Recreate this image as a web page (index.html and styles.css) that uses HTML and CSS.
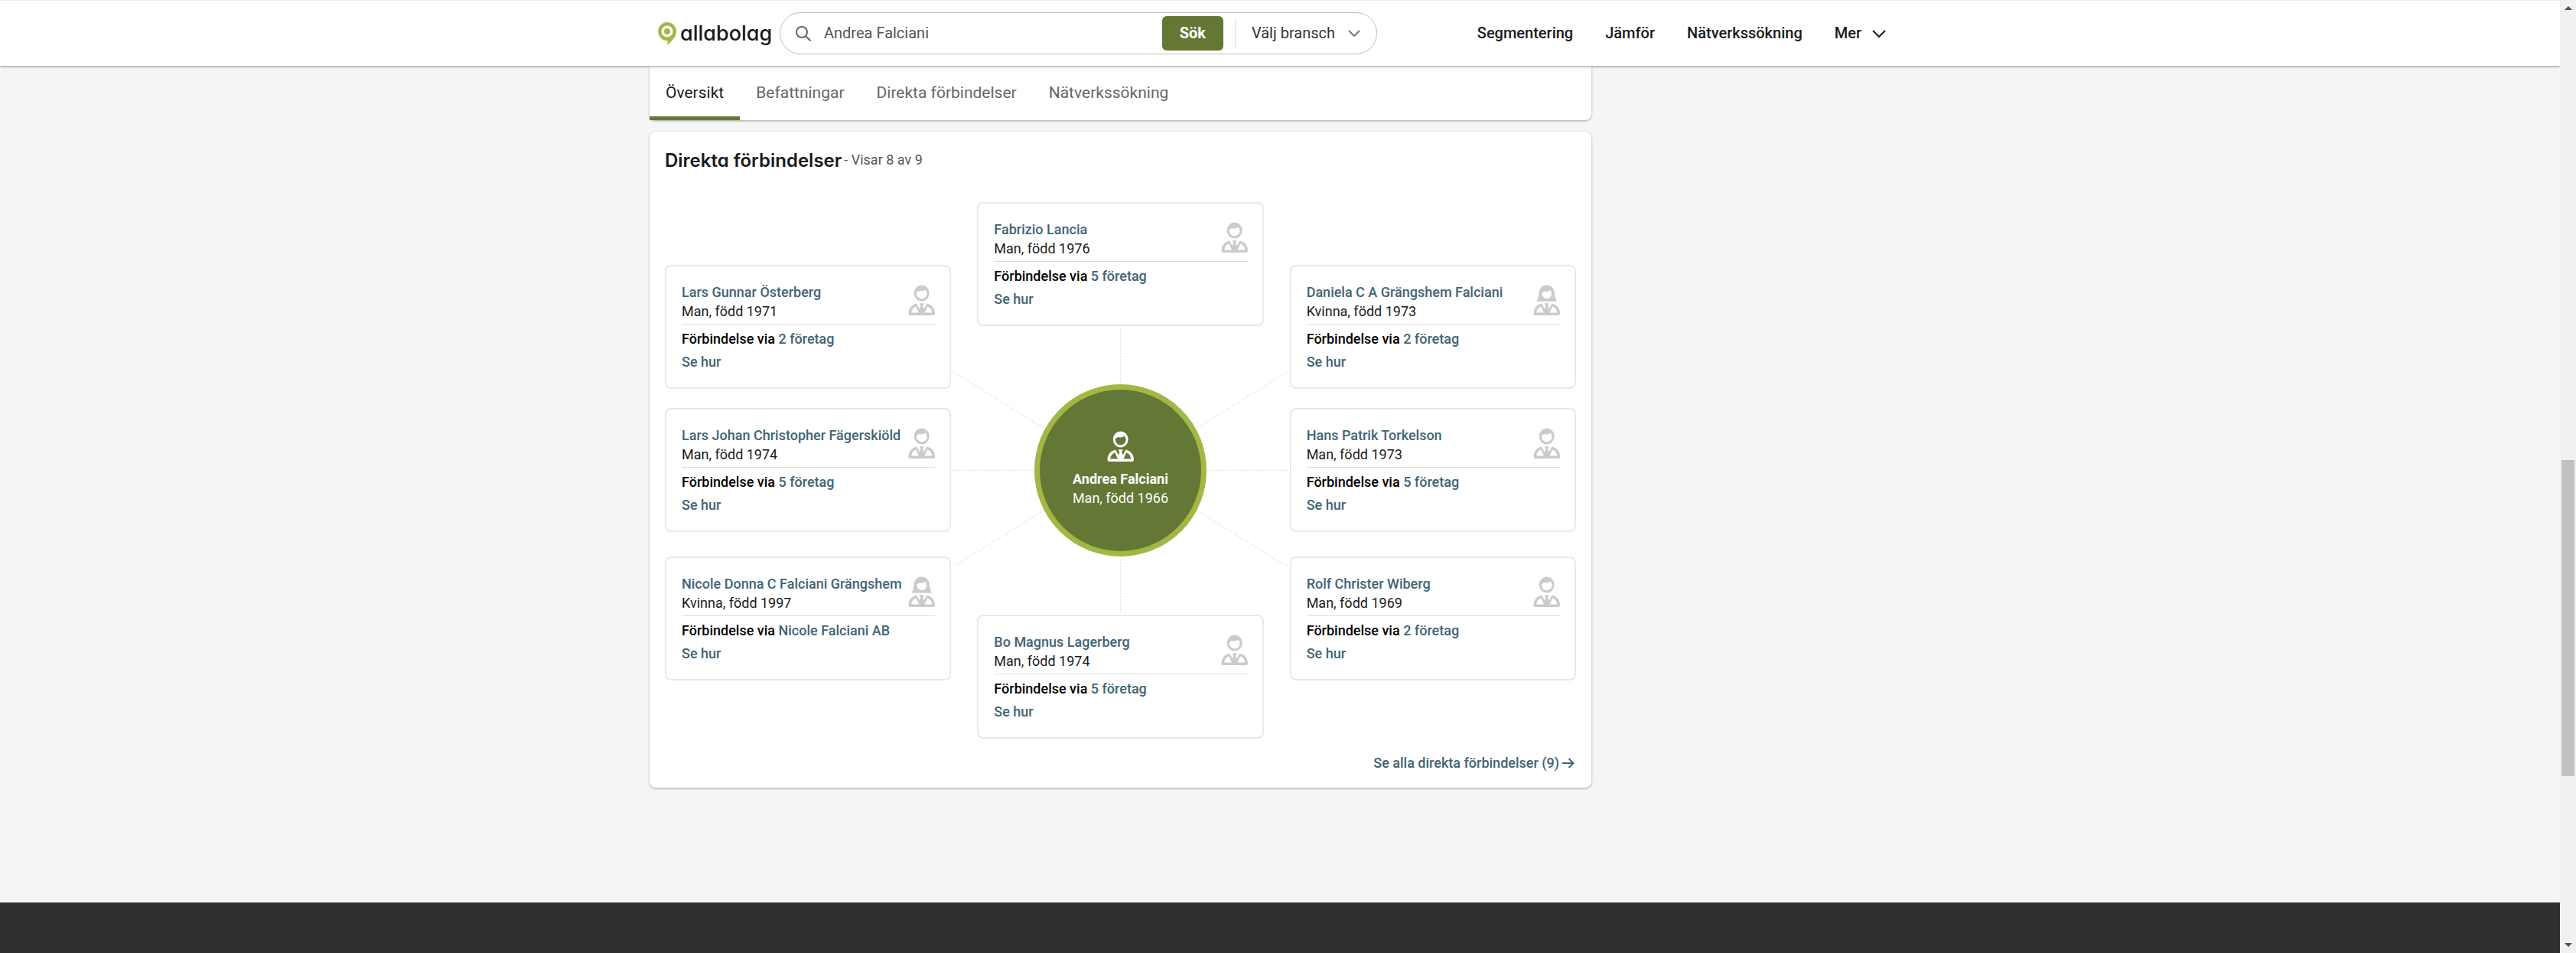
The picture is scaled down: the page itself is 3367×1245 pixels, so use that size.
FILE: index.html
```html
<!DOCTYPE html>
<html lang="sv">
<head>
<meta charset="utf-8">
<meta name="viewport" content="width=device-width, initial-scale=1">
<title>Andrea Falciani - Direkta förbindelser</title>
<link rel="stylesheet" href="styles.css">
</head>
<body>
<svg class="sprite" aria-hidden="true">
  <symbol id="shoulders" viewBox="0 0 35 40">
    <path fill="currentColor" fill-rule="evenodd" d="M11 24.500C4.500 26 .5 31 .5 37.500Q.5 40 3 40H32.500Q35 40 35 37.500C35 31 31 26 24.500 24.500L20.500 31.500 19.200 28 20.700 24.300H14.800L16.300 28 15 31.500ZM10.200 28.300 14 36.500H4.200C4.500 33 6.500 29.800 10.200 28.300ZM25.300 28.300C29 29.800 31 33 31.300 36.500H21.500Z"/>
  </symbol>
  <symbol id="man" viewBox="0 0 35 40">
    <path fill="currentColor" fill-rule="evenodd" d="M17.700 .5A10 10.500 0 1 1 17.700 21.500 10 10.500 0 1 1 17.700 .5ZM11 10C10.500 15 13.700 18.300 17.700 18.300 21.700 18.300 24.800 15 24.600 11 24.400 9 23.500 7.500 22 6.500 19.500 9.500 16 8 14.500 8.200 13 8.500 12 9.300 11 10Z"/>
    <use href="#shoulders"/>
  </symbol>
  <symbol id="woman" viewBox="0 0 35 40">
    <path fill="currentColor" fill-rule="evenodd" d="M17.700 .5C11.500 .5 8 5 7.500 11 7.200 15 6.500 18 4.500 21.800H31C29 18 28.200 15 27.900 11 27.400 5 24 .5 17.700 .5ZM11.500 10.500C11 15 14 18 17.700 18 21.500 18 24.300 15 24.100 11 24 9.500 23.200 8 21.800 7 19.500 9.500 16.500 8.500 15 8.700 13.500 9 12.500 9.700 11.500 10.500Z"/>
    <use href="#shoulders"/>
  </symbol>
</svg>

<header class="topbar">
  <div class="wrap topbar-inner">
    <a class="logo" href="#">
      <svg class="logo-pin" viewBox="0 0 24 30" aria-hidden="true">
        <path fill="#a3b745" fill-rule="evenodd" d="M12 0A12 12 0 0 1 24 12C24 20 18 24 12.500 30V24A12 12 0 1 1 12 0ZM12 4.500A7.500 7.500 0 1 0 12 19.500 7.500 7.500 0 1 0 12 4.500Z"/>
        <circle cx="12" cy="12" r="4" fill="#a3b745"/>
      </svg>
      <span class="logo-text">allabolag</span>
    </a>
    <form class="search">
      <svg class="search-icon" viewBox="0 0 20 20" aria-hidden="true"><circle cx="8" cy="8" r="7"/><path d="M13 13 19.500 19.500"/></svg>
      <input class="search-input" type="text" aria-label="Sök" value="Andrea Falciani">
      <button class="search-button" type="submit">Sök</button>
      <button class="industry" type="button">Välj bransch
        <svg class="chevron chevron-thin" viewBox="0 0 18 12" aria-hidden="true"><path d="M2 2 9 9 16 2"/></svg>
      </button>
    </form>
    <nav class="mainnav" aria-label="Huvudmeny">
      <a href="#">Segmentering</a>
      <a href="#">Jämför</a>
      <a href="#">Nätverkssökning</a>
      <button class="more" type="button">Mer
        <svg class="chevron" viewBox="0 0 18 12" aria-hidden="true"><path d="M1 2 9 10 17 2"/></svg>
      </button>
    </nav>
  </div>
</header>

<div class="wrap page">
  <main class="content">
    <nav class="card tabs" aria-label="Flikar">
      <a class="tab tab-active" href="#">Översikt</a>
      <a class="tab" href="#">Befattningar</a>
      <a class="tab" href="#">Direkta förbindelser</a>
      <a class="tab" href="#">Nätverkssökning</a>
    </nav>

    <section class="card connections">
      <div class="heading">
        <h2>Direkta förbindelser</h2>
        <span class="count">- Visar 8 av 9</span>
      </div>

      <div class="network">
        <svg class="lines" viewBox="0 0 1190 700" preserveAspectRatio="none" aria-hidden="true">
          <path d="M595 165V236M595 466V535M376 350H482M708 350H814M378 222 495 295M812 222 695 295M378 475 495 402M812 475 695 402"/>
        </svg>

        <div class="column">
          <article class="person">
            <div class="person-head"><div><a href="#">Lars Gunnar Österberg</a><p>Man, född 1971</p></div><svg class="avatar"><use href="#man"/></svg></div>
            <p class="via">Förbindelse via <a href="#">2 företag</a></p>
            <a class="how" href="#">Se hur</a>
          </article>
          <article class="person">
            <div class="person-head"><div><a href="#">Lars Johan Christopher Fägerskiöld</a><p>Man, född 1974</p></div><svg class="avatar"><use href="#man"/></svg></div>
            <p class="via">Förbindelse via <a href="#">5 företag</a></p>
            <a class="how" href="#">Se hur</a>
          </article>
          <article class="person">
            <div class="person-head"><div><a href="#">Nicole Donna C Falciani Grängshem</a><p>Kvinna, född 1997</p></div><svg class="avatar"><use href="#woman"/></svg></div>
            <p class="via">Förbindelse via <a href="#">Nicole Falciani AB</a></p>
            <a class="how" href="#">Se hur</a>
          </article>
        </div>

        <div class="column column-middle">
          <article class="person">
            <div class="person-head"><div><a href="#">Fabrizio Lancia</a><p>Man, född 1976</p></div><svg class="avatar"><use href="#man"/></svg></div>
            <p class="via">Förbindelse via <a href="#">5 företag</a></p>
            <a class="how" href="#">Se hur</a>
          </article>
          <div class="hub">
            <svg class="avatar"><use href="#man"/></svg>
            <strong>Andrea Falciani</strong>
            <span>Man, född 1966</span>
          </div>
          <article class="person">
            <div class="person-head"><div><a href="#">Bo Magnus Lagerberg</a><p>Man, född 1974</p></div><svg class="avatar"><use href="#man"/></svg></div>
            <p class="via">Förbindelse via <a href="#">5 företag</a></p>
            <a class="how" href="#">Se hur</a>
          </article>
        </div>

        <div class="column">
          <article class="person">
            <div class="person-head"><div><a href="#">Daniela C A Grängshem Falciani</a><p>Kvinna, född 1973</p></div><svg class="avatar"><use href="#woman"/></svg></div>
            <p class="via">Förbindelse via <a href="#">2 företag</a></p>
            <a class="how" href="#">Se hur</a>
          </article>
          <article class="person">
            <div class="person-head"><div><a href="#">Hans Patrik Torkelson</a><p>Man, född 1973</p></div><svg class="avatar"><use href="#man"/></svg></div>
            <p class="via">Förbindelse via <a href="#">5 företag</a></p>
            <a class="how" href="#">Se hur</a>
          </article>
          <article class="person">
            <div class="person-head"><div><a href="#">Rolf Christer Wiberg</a><p>Man, född 1969</p></div><svg class="avatar"><use href="#man"/></svg></div>
            <p class="via">Förbindelse via <a href="#">2 företag</a></p>
            <a class="how" href="#">Se hur</a>
          </article>
        </div>
      </div>

      <a class="all" href="#">Se alla direkta förbindelser (9)
        <svg class="arrow" viewBox="0 0 16 14" aria-hidden="true"><path d="M0 7H14.500M8.500 1 14.500 7 8.500 13"/></svg>
      </a>
    </section>
  </main>
</div>

<footer class="footer"></footer>

<div class="scrollbar" aria-hidden="true">
  <svg viewBox="0 0 12 6"><path d="M0 6 6 0 12 6Z"/></svg>
  <div class="track"><div class="thumb"></div></div>
  <svg viewBox="0 0 12 6"><path d="M0 0 6 6 12 0Z"/></svg>
</div>
</body>
</html>
```

FILE: styles.css
```css
* { box-sizing: border-box; }

body {
  margin: 0;
  min-height: 100vh;
  padding-right: 21px;
  display: flex;
  flex-direction: column;
  overflow: hidden;
  background: #f5f5f5;
  color: #1a1a1a;
  font-family: Roboto, "Liberation Sans", sans-serif;
  font-size: 18px;
  line-height: 25px;
}

h2, p { margin: 0; }
a { color: #3f6475; text-decoration: none; }
button, input { font: inherit; color: inherit; border: 0; background: none; padding: 0; }
.sprite { display: none; }

.wrap {
  width: 100%;
  max-width: 1648px;
  margin: 0 auto;
}

/* Top bar */
.topbar {
  position: relative;
  z-index: 1;
  background: #fff;
  border-top: 1px solid #ececec;
  box-shadow: 0 1px 3px rgba(0, 0, 0, .4);
  font-size: 20px;
}
.topbar-inner {
  display: flex;
  align-items: center;
  padding: 15px 32px 15px 11px;
}
.logo {
  width: 159px;
  display: flex;
  align-items: center;
  gap: 5px;
  color: #1a1a1a;
}
.logo-pin { width: 24px; height: 30px; }
.logo-text {
  font-family: Inter, sans-serif;
  font-feature-settings: "cv11";
  font-size: 27px;
  font-weight: 500;
}
.search {
  flex: 0 1 781px;
  height: 55px;
  display: flex;
  align-items: center;
  padding: 0 20px;
  border: 1px solid #bdbdbd;
  border-radius: 28px;
}
.search-icon {
  width: 20px;
  height: 20px;
  margin-right: 17px;
  fill: none;
  stroke: #666;
  stroke-width: 2;
}
.search-input { flex: 1; min-width: 0; color: #555; outline: 0; }
.search-button {
  width: 80px;
  height: 45px;
  margin-right: 15px;
  border-radius: 6px;
  background: #637835;
  color: #fff;
  font-weight: 700;
}
.industry {
  height: 40px;
  display: flex;
  align-items: center;
  gap: 16px;
  padding-left: 21px;
  border-left: 1px solid #e2e2e2;
  color: #333;
}
.chevron { width: 18px; height: 12px; fill: none; stroke: #1a1a1a; stroke-width: 2; }
.chevron-thin { stroke: #777; }
.mainnav {
  margin-left: auto;
  display: flex;
  gap: 42px;
  font-weight: 500;
}
.mainnav a { color: #1a1a1a; }
.more { display: flex; align-items: center; gap: 14px; }

/* Page column */
.page {
  display: grid;
  grid-template-columns: minmax(0, 1231px) 1fr;
}
.card {
  background: #fff;
  border-radius: 8px;
  box-shadow: 0 1px 3px rgba(0, 0, 0, .35);
}
.tabs {
  display: flex;
  border-radius: 0 0 8px 8px;
  font-size: 21px;
}
.tab {
  padding: 23px 21px 18px;
  border-bottom: 5px solid transparent;
  color: #666;
}
.tab-active { border-color: #637835; color: #1a1a1a; }

.connections {
  margin-top: 15px;
  padding: 20px;
  display: flex;
  flex-direction: column;
}
.heading {
  display: flex;
  align-items: center;
  gap: 3px;
  height: 32px;
}
h2 {
  padding-top: 2px;
  font-family: Inter, sans-serif;
  font-feature-settings: "cv11";
  font-size: 24px;
  font-weight: 600;
}
.count { color: #555; }

/* Network diagram */
.network {
  position: relative;
  display: grid;
  grid-template-columns: repeat(3, minmax(0, 1fr));
  gap: 34px;
  margin-top: 40px;
}
.lines {
  position: absolute;
  inset: 0;
  width: 100%;
  height: 100%;
  fill: none;
  stroke: #ddd;
  stroke-dasharray: 2 2;
}
.column {
  position: relative;
  display: flex;
  flex-direction: column;
  gap: 25px;
  padding-top: 82px;
}
.column .person:last-child { margin-top: 7px; }
.column-middle { gap: 76px; padding-top: 0; }
.column-middle .person:last-child { margin-top: 0; }

.person {
  min-height: 162px;
  padding: 21px 19px 20px 20px;
  border: 2px solid #e9e9e9;
  border-radius: 8px;
  background: #fff;
}
.person a { font-weight: 500; }
.person-head {
  display: flex;
  justify-content: space-between;
  padding-bottom: 4px;
  border-bottom: 1px solid #dcdcdc;
}
.avatar { width: 35px; height: 40px; margin-top: 3px; color: #cbcbcb; }
.via { margin: 6px 0 5px; color: #000; font-weight: 500; }
.how { display: block; }

.hub {
  align-self: center;
  width: 225px;
  height: 225px;
  display: flex;
  flex-direction: column;
  align-items: center;
  justify-content: center;
  padding-bottom: 6px;
  border: 7px solid #a3b745;
  border-radius: 50%;
  background: #637835;
  color: #fff;
}
.hub .avatar { color: #fff; margin-bottom: 10px; }

.all {
  align-self: flex-end;
  display: flex;
  align-items: center;
  gap: 4px;
  margin: 19px 2px 0 0;
  font-weight: 500;
}
.arrow { width: 16px; height: 14px; fill: none; stroke: #3f6475; stroke-width: 2; }

.footer { height: 66px; margin-top: auto; background: #303030; }

/* Window scrollbar */
.scrollbar {
  position: fixed;
  inset: 0 0 0 auto;
  z-index: 2;
  width: 21px;
  display: flex;
  flex-direction: column;
  align-items: center;
  padding: 8px 0;
  background: #f1f1f1;
}
.scrollbar svg { width: 10px; height: 5px; fill: #505050; }
.track { flex: 1; width: 17px; padding-top: 588px; }
.thumb { height: 34%; min-height: 413px; background: #c1c1c1; }
```
